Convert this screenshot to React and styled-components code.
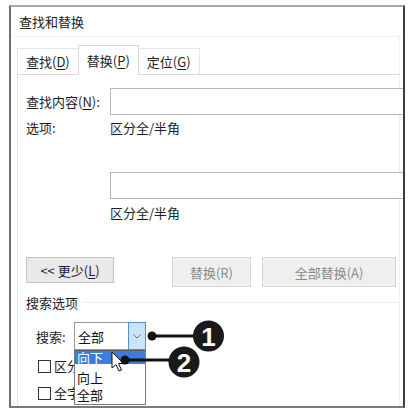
import styled, { createGlobalStyle } from 'styled-components';

const GlobalStyle = createGlobalStyle`
    html, body {
        margin: 0;
        padding: 0;
        background: #ffffff;
    }
    body {
        font-family: "Noto Sans CJK SC", "Liberation Sans", sans-serif;
        font-size: 13px;
        color: #1e1e1e;
    }
`;

const App = () => {
    return (
        <Page>
            <GlobalStyle />
            <Window>
                <TitleBar>查找和替换</TitleBar>
                <TabStrip>
                    <Tab>查找(<u>D</u>)</Tab>
                    <Tab $active>替换(<u>P</u>)</Tab>
                    <Tab>定位(<u>G</u>)</Tab>
                </TabStrip>
                <Panel>
                    <FieldRow $top={13}>
                        <FieldLabel>查找内容(<u>N</u>):</FieldLabel>
                        <TextBox />
                    </FieldRow>
                    <InfoRow $top={5}>
                        <FieldLabel>选项:</FieldLabel>
                        <span>区分全/半角</span>
                    </InfoRow>
                    <FieldRow $top={36}>
                        <FieldLabel />
                        <TextBox />
                    </FieldRow>
                    <InfoRow $top={6}>
                        <FieldLabel />
                        <span>区分全/半角</span>
                    </InfoRow>
                    <ButtonRow>
                        <Button $w={88} $h={26}>
                            &lt;&lt; 更少(<u>L</u>)
                        </Button>
                        <Button $w={79} $h={30} $gap={58} disabled>
                            替换(R)
                        </Button>
                        <Button $w={134} $h={30} $gap={11} disabled>
                            全部替换(A)
                        </Button>
                    </ButtonRow>
                    <GroupHeader>
                        <span>搜索选项</span>
                        <GroupLine />
                    </GroupHeader>
                    <SearchRow>
                        <SearchLabel>搜索:</SearchLabel>
                        <SelectWrap>
                            <Select>
                                <SelectValue>全部</SelectValue>
                                <SelectArrow>
                                    <svg width="8" height="5" viewBox="0 0 8 5">
                                        <path d="M0.5 0.5 L4 4 L7.5 0.5" fill="none" stroke="#6b6b6b" strokeWidth="1" />
                                    </svg>
                                </SelectArrow>
                            </Select>
                            <DropList>
                                <DropItem $selected>向下</DropItem>
                                <DropItem>向上</DropItem>
                                <DropItem>全部</DropItem>
                            </DropList>
                        </SelectWrap>
                    </SearchRow>
                    <CheckRow $top={8}>
                        <CheckBox />
                        <span>区分大小写(<u>H</u>)</span>
                    </CheckRow>
                    <CheckRow $top={11}>
                        <CheckBox />
                        <span>全字匹配(<u>Y</u>)</span>
                    </CheckRow>
                </Panel>
            </Window>
            <Overlay width="413" height="413" viewBox="0 0 413 413">
                {/* mouse pointer */}
                <path
                    d="M112 352 L112 368 L116 364.5 L119 371 L121.5 370 L118.5 363.5 L123.5 363.5 Z"
                    fill="#ffffff"
                    stroke="#111"
                    strokeWidth="1"
                    strokeLinejoin="round"
                />
                {/* callout 1 */}
                <line x1="152" y1="336" x2="196" y2="336" stroke="#111" strokeWidth="3" />
                <circle cx="152" cy="336" r="4.5" fill="#111" />
                <circle cx="208.5" cy="336" r="15.5" fill="#1a1a1a" />
                <CalloutNum x="208.5" y="345.5">1</CalloutNum>
                {/* callout 2 */}
                <line x1="125" y1="360" x2="172" y2="360" stroke="#111" strokeWidth="3" />
                <circle cx="125" cy="360" r="4.5" fill="#111" />
                <circle cx="184" cy="362" r="15.5" fill="#1a1a1a" />
                <CalloutNum x="184" y="371.5">2</CalloutNum>
            </Overlay>
        </Page>
    );
};

export default App;

const Page = styled.div`
    position: relative;
    width: 413px;
    height: 413px;
    padding: 5px 0 0 9px;
    box-sizing: border-box;
    overflow: hidden;
`;

const Window = styled.div`
    width: 396px;
    height: 403px;
    box-sizing: border-box;
    border-top: 2px solid #a9a9a9;
    border-left: 2px solid #6f6f6f;
    border-right: 2px solid #3d3d3d;
    border-bottom: 2px solid #7a7a7a;
    background: #ffffff;
    overflow: hidden;
    display: flex;
    flex-direction: column;
`;

const TitleBar = styled.div`
    height: 30px;
    box-sizing: border-box;
    padding-left: 8px;
    display: flex;
    align-items: center;
    border-bottom: 1px solid #f2f2f2;
    color: #222;
`;

const TabStrip = styled.div`
    height: 37px;
    display: flex;
    align-items: flex-end;
    padding-left: 6px;
    margin-right: 3px;
    border-right: 1px solid #f2f2f2;
`;

const Tab = styled.div`
    height: ${(p) => (p.$active ? '30px' : '26px')};
    box-sizing: border-box;
    padding: 0 8px;
    display: flex;
    align-items: center;
    background: #ffffff;
    border: 1px solid ${(p) => (p.$active ? '#d9d9d9' : '#e6e6e6')};
    border-bottom: none;
    margin: 0 ${(p) => (p.$active ? '-1px' : '0')} ${(p) => (p.$active ? '-1px' : '0')};
    position: relative;
    z-index: ${(p) => (p.$active ? 1 : 0)};
    & > u {
        text-underline-offset: 2px;
    }
`;

const Panel = styled.div`
    flex: 1;
    margin-left: 6px;
    margin-right: 3px;
    border-top: 1px solid #dadada;
    border-left: 1px solid #e6e6e6;
    border-right: 1px solid #efefef;
    padding-left: 8px;
    display: flex;
    flex-direction: column;
    & u {
        text-underline-offset: 2px;
    }
`;

const FieldRow = styled.div`
    display: flex;
    align-items: center;
    margin-top: ${(p) => p.$top}px;
    margin-right: -6px;
`;

const FieldLabel = styled.span`
    width: 84px;
    flex-shrink: 0;
`;

const TextBox = styled.div`
    flex: 1;
    height: 27px;
    box-sizing: border-box;
    border: 1px solid #b7b7b7;
    border-right: none;
    background: #ffffff;
`;

const InfoRow = styled.div`
    display: flex;
    line-height: 16px;
    margin-top: ${(p) => p.$top}px;
`;

const ButtonRow = styled.div`
    display: flex;
    align-items: flex-start;
    margin-top: 36px;
`;

const Button = styled.button`
    width: ${(p) => p.$w}px;
    height: ${(p) => p.$h}px;
    margin-left: ${(p) => p.$gap || 0}px;
    box-sizing: border-box;
    padding: 0;
    font-family: inherit;
    font-size: 13px;
    color: #1c1c3a;
    background: #e9e9e9;
    border: 1px solid #c4c4c4;
    border-radius: 0;
    &:disabled {
        color: #8a8a8a;
        background: #efefef;
        border-color: #d6d6d6;
    }
`;

const GroupHeader = styled.div`
    display: flex;
    align-items: center;
    line-height: 16px;
    margin-top: 8px;
    gap: 4px;
`;

const GroupLine = styled.div`
    flex: 1;
    height: 1px;
    background: #ececec;
    margin-top: -2px;
`;

const SearchRow = styled.div`
    display: flex;
    align-items: center;
    margin-top: 11px;
    padding-left: 10px;
`;

const SearchLabel = styled.span`
    width: 38px;
`;

const SelectWrap = styled.div`
    position: relative;
    width: 72px;
    height: 28px;
`;

const Select = styled.div`
    height: 100%;
    box-sizing: border-box;
    border: 1px solid #9a9a9a;
    background: #ffffff;
    display: flex;
    align-items: center;
    justify-content: space-between;
`;

const SelectValue = styled.span`
    padding-left: 3px;
    color: #111;
`;

const SelectArrow = styled.div`
    width: 18px;
    height: 28px;
    margin: -1px -1px -1px 0;
    box-sizing: border-box;
    background: #cce4f7;
    border: 1px solid #4f8fcb;
    display: flex;
    align-items: center;
    justify-content: center;
`;

const DropList = styled.div`
    position: absolute;
    top: 100%;
    left: 0;
    width: 72px;
    height: 55px;
    box-sizing: border-box;
    border: 1px solid #7b7b7b;
    border-top-color: #5a5a5a;
    background: #ffffff;
    z-index: 2;
`;

const DropItem = styled.div`
    height: ${(p) => (p.$selected ? '13px' : '17px')};
    line-height: ${(p) => (p.$selected ? '13px' : '17px')};
    margin-bottom: ${(p) => (p.$selected ? '5px' : '0')};
    padding-left: 2px;
    background: ${(p) => (p.$selected ? '#3b7fd9' : 'transparent')};
    color: ${(p) => (p.$selected ? '#ffffff' : '#111')};
`;

const CheckRow = styled.div`
    display: flex;
    align-items: center;
    gap: 3px;
    line-height: 16px;
    margin-top: ${(p) => p.$top}px;
    padding-left: 12px;
`;

const CheckBox = styled.span`
    width: 13px;
    height: 13px;
    box-sizing: border-box;
    border: 1px solid #333;
    background: #fff;
`;

const Overlay = styled.svg`
    position: absolute;
    left: 0;
    top: 0;
    pointer-events: none;
    z-index: 5;
`;

const CalloutNum = styled.text`
    fill: #ffffff;
    font-family: "Liberation Sans", "DejaVu Sans", sans-serif;
    font-size: 26px;
    font-weight: bold;
    text-anchor: middle;
`;
